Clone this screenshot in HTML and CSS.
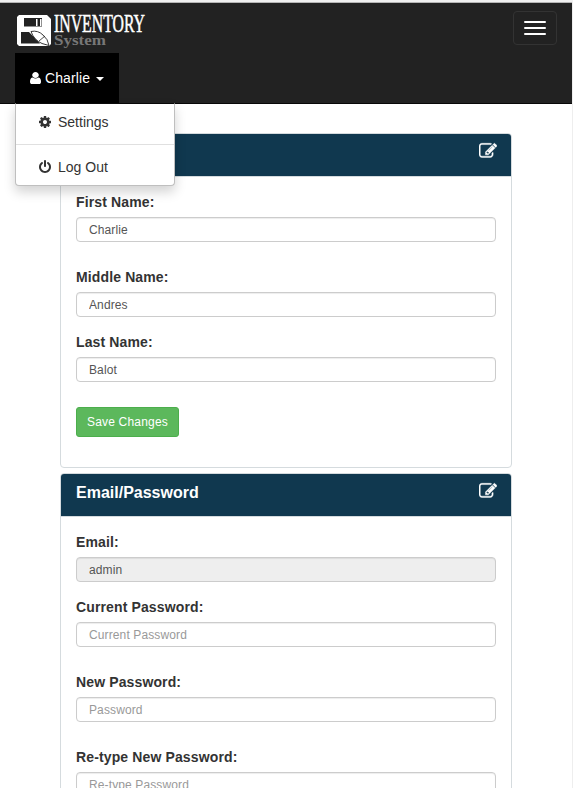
FILE: index.html
```html
<!DOCTYPE html>
<html lang="en">
<head>
<meta charset="utf-8">
<title>Inventory System</title>
<link rel="stylesheet" href="styles.css">
</head>
<body>
<svg width="0" height="0" class="defs">
  <symbol id="edit" viewBox="0 0 1792 1792"><path d="M888 1184l116-116-152-152-116 116v56h96v96h56zm440-720q-16-16-33 1l-350 350q-17 17-1 33t33-1l350-350q17-17 1-33zm80 594v190q0 119-84.5 203.5t-203.5 84.5h-832q-119 0-203.5-84.5t-84.5-203.5v-832q0-119 84.5-203.5t203.5-84.5h832q63 0 117 25 15 7 18 23 3 17-9 29l-49 49q-14 14-32 8-23-6-45-6h-832q-66 0-113 47t-47 113v832q0 66 47 113t113 47h832q66 0 113-47t47-113v-126q0-13 9-22l64-64q15-15 35-7t20 29zm-96-738l288 288-672 672h-288v-288zm444 132l-92 92-288-288 92-92q28-28 68-28t68 28l152 152q28 28 28 68t-28 68z"/></symbol>
</svg>
<nav class="navbar">
  <div class="navbar-header">
    <svg class="logo" width="136" height="40" viewBox="0 0 136 40">
      <path fill="#fff" fill-rule="evenodd" d="M4 4H32L36 8V33L34 35H4L2 33V6ZM9 7V15.500H27V7ZM6 21V32.500H25L14 21Z"/>
      <path fill="#fff" d="M21 8H22.500V15H21ZM25 8H26.500V15H25Z"/>
      <path fill="#fff" stroke="#222" stroke-width=".9" d="M16 20.500Q23 19 28 24Q33 28 34 34.500L27 32.500Q19 29 16 20.500Z"/>
      <path stroke="#222" stroke-width=".8" d="M24 30L30 25"/>
      <text class="logo-name" x="39" y="21" textLength="91" lengthAdjust="spacingAndGlyphs">INVENTORY</text>
      <text class="logo-sub" x="39" y="34" textLength="52" lengthAdjust="spacingAndGlyphs">System</text>
    </svg>
    <button class="toggle" aria-label="Menu"><i></i><i></i><i></i></button>
  </div>
  <div class="user">
    <a class="user-link">
      <svg class="user-icon" viewBox="256 128 1280 1536" preserveAspectRatio="none"><path d="M1536 1399q0 109-62.5 187t-150.500 78h-854q-88 0-150.500-78t-62.500-187q0-85 8.500-160.500t31.500-152 58.500-131 94-89 134.500-34.500q131 128 313 128t313-128q76 0 134.500 34.500t94 89 58.500 131 31.500 152 8.500 160.500zm-256-887q0 159-112.500 271.500t-271.500 112.500-271.500-112.500-112.500-271.500 112.500-271.500 271.500-112.500 271.500 112.500 112.500 271.500z"/></svg>
      <span>Charlie</span><b class="caret"></b>
    </a>
    <div class="menu">
      <a class="item"><svg viewBox="0 0 1792 1792"><path d="M1152 896q0-106-75-181t-181-75-181 75-75 181 75 181 181 75 181-75 75-181zm512-109v222q0 12-8 23t-20 13l-185 28q-19 54-39 91 35 50 107 138 10 12 10 25t-9 23q-27 37-99 108t-94 71q-12 0-26-9l-138-108q-44 23-91 38-16 136-29 186-7 28-36 28h-222q-14 0-24.500-8.500t-11.500-21.500l-28-184q-49-16-90-37l-141 107q-10 9-25 9-14 0-25-11-126-114-165-168-7-10-7-23 0-12 8-23 15-21 51-66.500t54-70.500q-27-50-41-99l-183-27q-13-2-21-12.500t-8-23.500v-222q0-12 8-23t19-13l186-28q14-46 39-92-40-57-107-138-10-12-10-24 0-10 9-23 26-36 98.500-107.500t94.500-71.500q13 0 26 10l138 107q44-23 91-38 16-136 29-186 7-28 36-28h222q14 0 24.500 8.500t11.500 21.500l28 184q49 16 90 37l142-107q9-9 24-9 13 0 25 10 129 119 165 170 7 8 7 22 0 12-8 23-15 21-51 66.500t-54 70.500q26 50 41 98l183 28q13 2 21 12.500t8 23.500z"/></svg>Settings</a>
      <hr>
      <a class="item"><svg viewBox="0 0 1792 1792"><path d="M1664 896q0 156-61 298t-164 245-245 164-298 61-298-61-245-164-164-245-61-298q0-182 80.500-343t226.500-270q43-32 95.500-25t83.500 50q32 42 24.500 94.500t-49.500 84.500q-98 74-151.500 181t-53.500 228q0 104 40.500 198.500t109.500 163.500 163.500 109.500 198.500 40.500 198.500-40.500 163.500-109.500 109.500-163.500 40.500-198.500q0-121-53.500-228t-151.500-181q-42-32-49.500-84.500t24.500-94.500q31-43 84-50t95 25q146 109 226.500 270t80.500 343zm-640-768v640q0 52-38 90t-90 38-90-38-38-90v-640q0-52 38-90t90-38 90 38 38 90z"/></svg>Log Out</a>
    </div>
  </div>
</nav>
<main>
  <section class="panel">
    <header><h2></h2><svg class="edit"><use href="#edit"/></svg></header>
    <form>
      <label>First Name:</label>
      <input class="wide-gap" value="Charlie">
      <label>Middle Name:</label>
      <input value="Andres">
      <label>Last Name:</label>
      <input class="wide-gap" value="Balot">
      <button class="save" type="button">Save Changes</button>
    </form>
  </section>
  <section class="panel">
    <header><h2>Email/Password</h2><svg class="edit"><use href="#edit"/></svg></header>
    <form>
      <label>Email:</label>
      <input value="admin" disabled>
      <label>Current Password:</label>
      <input class="wide-gap" placeholder="Current Password">
      <label>New Password:</label>
      <input class="wide-gap" placeholder="Password">
      <label>Re-type New Password:</label>
      <input placeholder="Re-type Password">
    </form>
  </section>
</main>
</body>
</html>
```
FILE: styles.css
```css
* { box-sizing: border-box; }
html { height: 100%; overflow: hidden; }
body {
  margin: 0;
  height: 100%;
  overflow: hidden;
  border-top: 2px solid #f0f0f0;
  border-right: 1px solid #eee;
  background: #fff;
  color: #333;
  font: 14px/20px "Liberation Sans", Arial, sans-serif;
}
.defs { position: absolute; }
.navbar {
  height: 102px;
  background: #222;
  border-top: 1px solid #b5b5b5;
  border-bottom: 1px solid #080808;
}
.navbar-header {
  height: 50px;
  display: flex;
  justify-content: space-between;
  padding: 8px 15px 0;
}
.logo { display: block; overflow: visible; }
.logo-name { font: 25px "Liberation Serif", serif; fill: #fff; stroke: #fff; stroke-width: .5px; }
.logo-sub { font: bold 14.5px "Liberation Serif", serif; fill: #777; }
.toggle {
  width: 44px;
  height: 34px;
  padding: 0 10px;
  display: flex;
  flex-direction: column;
  justify-content: center;
  gap: 4px;
  background: none;
  border: 1px solid #333;
  border-radius: 4px;
}
.toggle i { height: 2px; background: #fff; border-radius: 1px; }
.user { position: relative; width: 104px; margin-left: 15px; }
.user-link {
  height: 50px;
  display: flex;
  align-items: center;
  padding-left: 15px;
  background: #000;
  color: #fff;
  letter-spacing: .1px;
}
.user-icon { width: 11px; height: 12px; margin-right: 4px; fill: #fff; }
.caret {
  margin: 2px 0 0 6px;
  border: 4px solid transparent;
  border-top-color: #fff;
  border-bottom: 0;
}
.menu {
  position: absolute;
  top: 50px;
  left: 0;
  width: 160px;
  height: 83px;
  padding: 8px 0;
  background: #fff;
  border: 1px solid #bfbfbf;
  border-top-color: #080808;
  border-radius: 0 0 4px 4px;
  box-shadow: 0 6px 12px rgba(0, 0, 0, .175);
}
.item { display: flex; align-items: center; height: 20px; padding-left: 22px; }
.item svg { width: 14px; height: 14px; margin-right: 6px; fill: #333; }
.menu hr { height: 1px; margin: 12px 0; border: 0; background: #e0e0e0; }
main { padding: 29px 60px 0; }
.panel {
  width: 452px;
  height: 335px;
  margin-bottom: 5px;
  border: 1px solid #d5dbde;
  border-radius: 4px;
}
.panel header {
  height: 43px;
  display: flex;
  justify-content: space-between;
  padding: 8px 14px 0 15px;
  background: #10384f;
  border-bottom: 1px solid #d5dbde;
  border-radius: 3px 3px 0 0;
}
h2 { margin: 1px 0 0; color: #fff; font-size: 16px; line-height: 20px; }
.edit { width: 18px; height: 18px; fill: #fff; stroke: #fff; stroke-width: 40px; }
form { padding: 15px 15px 0; }
label { display: block; margin-bottom: 5px; font-weight: bold; letter-spacing: .13px; }
input {
  display: block;
  width: 100%;
  height: 25px;
  margin-bottom: 15px;
  padding: 0 12px;
  background: #fff;
  color: #555;
  border: 1px solid #ccc;
  border-radius: 4px;
  box-shadow: inset 0 1px 1px rgba(0, 0, 0, .075);
  font: 12px "Liberation Sans", Arial, sans-serif;
  letter-spacing: .12px;
}
input:disabled { background: #eee; }
input::placeholder { color: #999; }
.wide-gap { margin-bottom: 25px; }
.save {
  width: 103px;
  height: 30px;
  padding: 0;
  background: #5cb85c;
  color: #fff;
  border: 1px solid #4cae4c;
  border-radius: 3px;
  font: 12px "Liberation Sans", Arial, sans-serif;
  letter-spacing: .2px;
}
```
